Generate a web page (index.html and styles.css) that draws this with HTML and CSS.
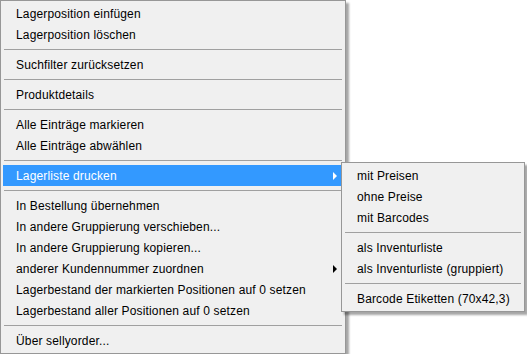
FILE: index.html
```html
<!DOCTYPE html>
<html lang="de">
<head>
    <meta charset="UTF-8">
    <title>Lagerliste Kontextmenü</title>
    <link rel="stylesheet" href="styles.css">
</head>
<body>
    <div class="popup">
        <ul class="menu main-menu">
            <li class="menu-item">Lagerposition einfügen</li>
            <li class="menu-item">Lagerposition löschen</li>
            <li class="separator"></li>
            <li class="menu-item">Suchfilter zurücksetzen</li>
            <li class="separator"></li>
            <li class="menu-item">Produktdetails</li>
            <li class="separator"></li>
            <li class="menu-item">Alle Einträge markieren</li>
            <li class="menu-item">Alle Einträge abwählen</li>
            <li class="separator"></li>
            <li class="menu-item has-sub active">Lagerliste drucken</li>
            <li class="separator"></li>
            <li class="menu-item">In Bestellung übernehmen</li>
            <li class="menu-item">In andere Gruppierung verschieben...</li>
            <li class="menu-item">In andere Gruppierung kopieren...</li>
            <li class="menu-item has-sub">anderer Kundennummer zuordnen</li>
            <li class="menu-item">Lagerbestand der markierten Positionen auf 0 setzen</li>
            <li class="menu-item">Lagerbestand aller Positionen auf 0 setzen</li>
            <li class="separator"></li>
            <li class="menu-item">Über sellyorder...</li>
        </ul>

        <!-- Untermenü von "Lagerliste drucken" -->
        <ul class="menu sub-menu">
            <li class="menu-item">mit Preisen</li>
            <li class="menu-item">ohne Preise</li>
            <li class="menu-item">mit Barcodes</li>
            <li class="separator"></li>
            <li class="menu-item">als Inventurliste</li>
            <li class="menu-item">als Inventurliste (gruppiert)</li>
            <li class="separator"></li>
            <li class="menu-item">Barcode Etiketten (70x42,3)</li>
        </ul>
    </div>
</body>
</html>
```

FILE: styles.css
```css
body {
    margin: 0;
    background: #fff;
    font-family: 'Liberation Sans', Arial, sans-serif;
    font-size: 12px;
    letter-spacing: 0.15px;
    color: #000;
}

.popup {
    position: relative;
}

.menu {
    list-style: none;
    margin: 0;
    padding: 2px;
    background: #f0f0f0;
    border: 1px solid #979797;
    box-shadow: 3px 3px 2px rgba(0, 0, 0, 0.35);
}

.main-menu {
    width: 340px;
}

.sub-menu {
    position: absolute;
    left: 341px;
    top: 162px;
    width: 178px;
}

.menu-item {
    height: 20px;
    padding-top: 1px;
    line-height: 21px;
    padding-left: 13px;
    white-space: nowrap;
    position: relative;
}

.menu-item.active {
    background: #3399ff;
    color: #fff;
}

/* kleiner Pfeil für Untermenüs */
.has-sub::after {
    content: "";
    position: absolute;
    right: 6px;
    top: 7px;
    border-left: 4px solid #000;
    border-top: 4px solid transparent;
    border-bottom: 4px solid transparent;
}

.has-sub.active::after {
    border-left-color: #fff;
}

.separator {
    height: 9px;
    position: relative;
}

.separator::before {
    content: "";
    position: absolute;
    left: 1px;
    right: 1px;
    top: 4px;
    border-top: 1px solid #a0a0a0;
}
```
